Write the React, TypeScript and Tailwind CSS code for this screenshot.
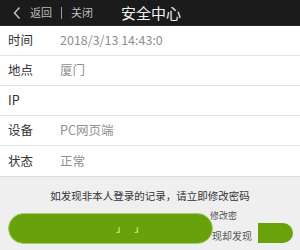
import React from "react";

const font = { fontFamily: '"Noto Sans CJK SC", "Noto Sans", sans-serif' };

function Row({ label, value, last }: { label: string; value: string; last?: boolean }) {
  return (
    <div className={`flex items-center h-[30px] ${last ? "" : "border-b border-[#e3e3e3]"}`}>
      <div className="w-[60px] pl-[8px] text-[12.5px] text-[#333]">{label}</div>
      <div className="text-[12.5px] text-[#8f8f8f]">{value}</div>
    </div>
  );
}

export default function App() {
  return (
    <div className="w-[300px] h-[250px] overflow-hidden bg-[#efefef] flex flex-col" style={font}>
      <div className="h-[26px] bg-[#1b1b1b] flex items-center text-white shrink-0 border-b border-[#2a2a2a]">
        <svg width="10" height="14" viewBox="0 0 10 14" className="ml-[12px]">
          <path d="M7.5 1.5 L2.5 7 L7.5 12.5" stroke="#bbbbbb" strokeWidth="1.6" fill="none" />
        </svg>
        <span className="ml-[8px] text-[11px] text-[#bdbdbd]">返回</span>
        <span className="ml-[9px] w-px h-[12px] bg-[#9a9a9a]"></span>
        <span className="ml-[9px] text-[11px] text-[#bdbdbd]">关闭</span>
        <span className="ml-[28px] text-[15px] text-[#f2f2f2] leading-none">安全中心</span>
      </div>
      <div className="bg-white">
        <Row label="时间" value="2018/3/13 14:43:0" />
        <Row label="地点" value="厦门" />
        <Row label="IP" value="" />
        <Row label="设备" value="PC网页端" />
        <Row label="状态" value="正常" last />
      </div>
      <div className="h-px bg-[#dcdcdc]"></div>
      <div className="text-center text-[10.5px] text-[#333] mt-[14px] leading-none">
        如发现非本人登录的记录，请立即修改密码
      </div>
      <div className="relative mt-[10px] h-[40px]">
        <div className="absolute left-[8px] top-[2px] w-[205px] h-[31px] rounded-full bg-[#68a10b] border border-[#a9cc6a] flex items-center justify-center">
          <span className="text-[10px] text-[#d6ef9a] ml-[40px] tracking-[6px]">ɹ ɹ</span>
        </div>
        <span className="absolute left-[210px] top-[-2px] text-[9px] text-[#555]">修改密</span>
        <span className="absolute left-[212px] top-[17px] text-[10px] text-[#555]">现却发现</span>
        <div className="absolute left-[258px] top-[12px] w-[35px] h-[20px] bg-[#6aa20c] rounded-r-full rounded-l-[8px]"></div>
      </div>
    </div>
  );
}
